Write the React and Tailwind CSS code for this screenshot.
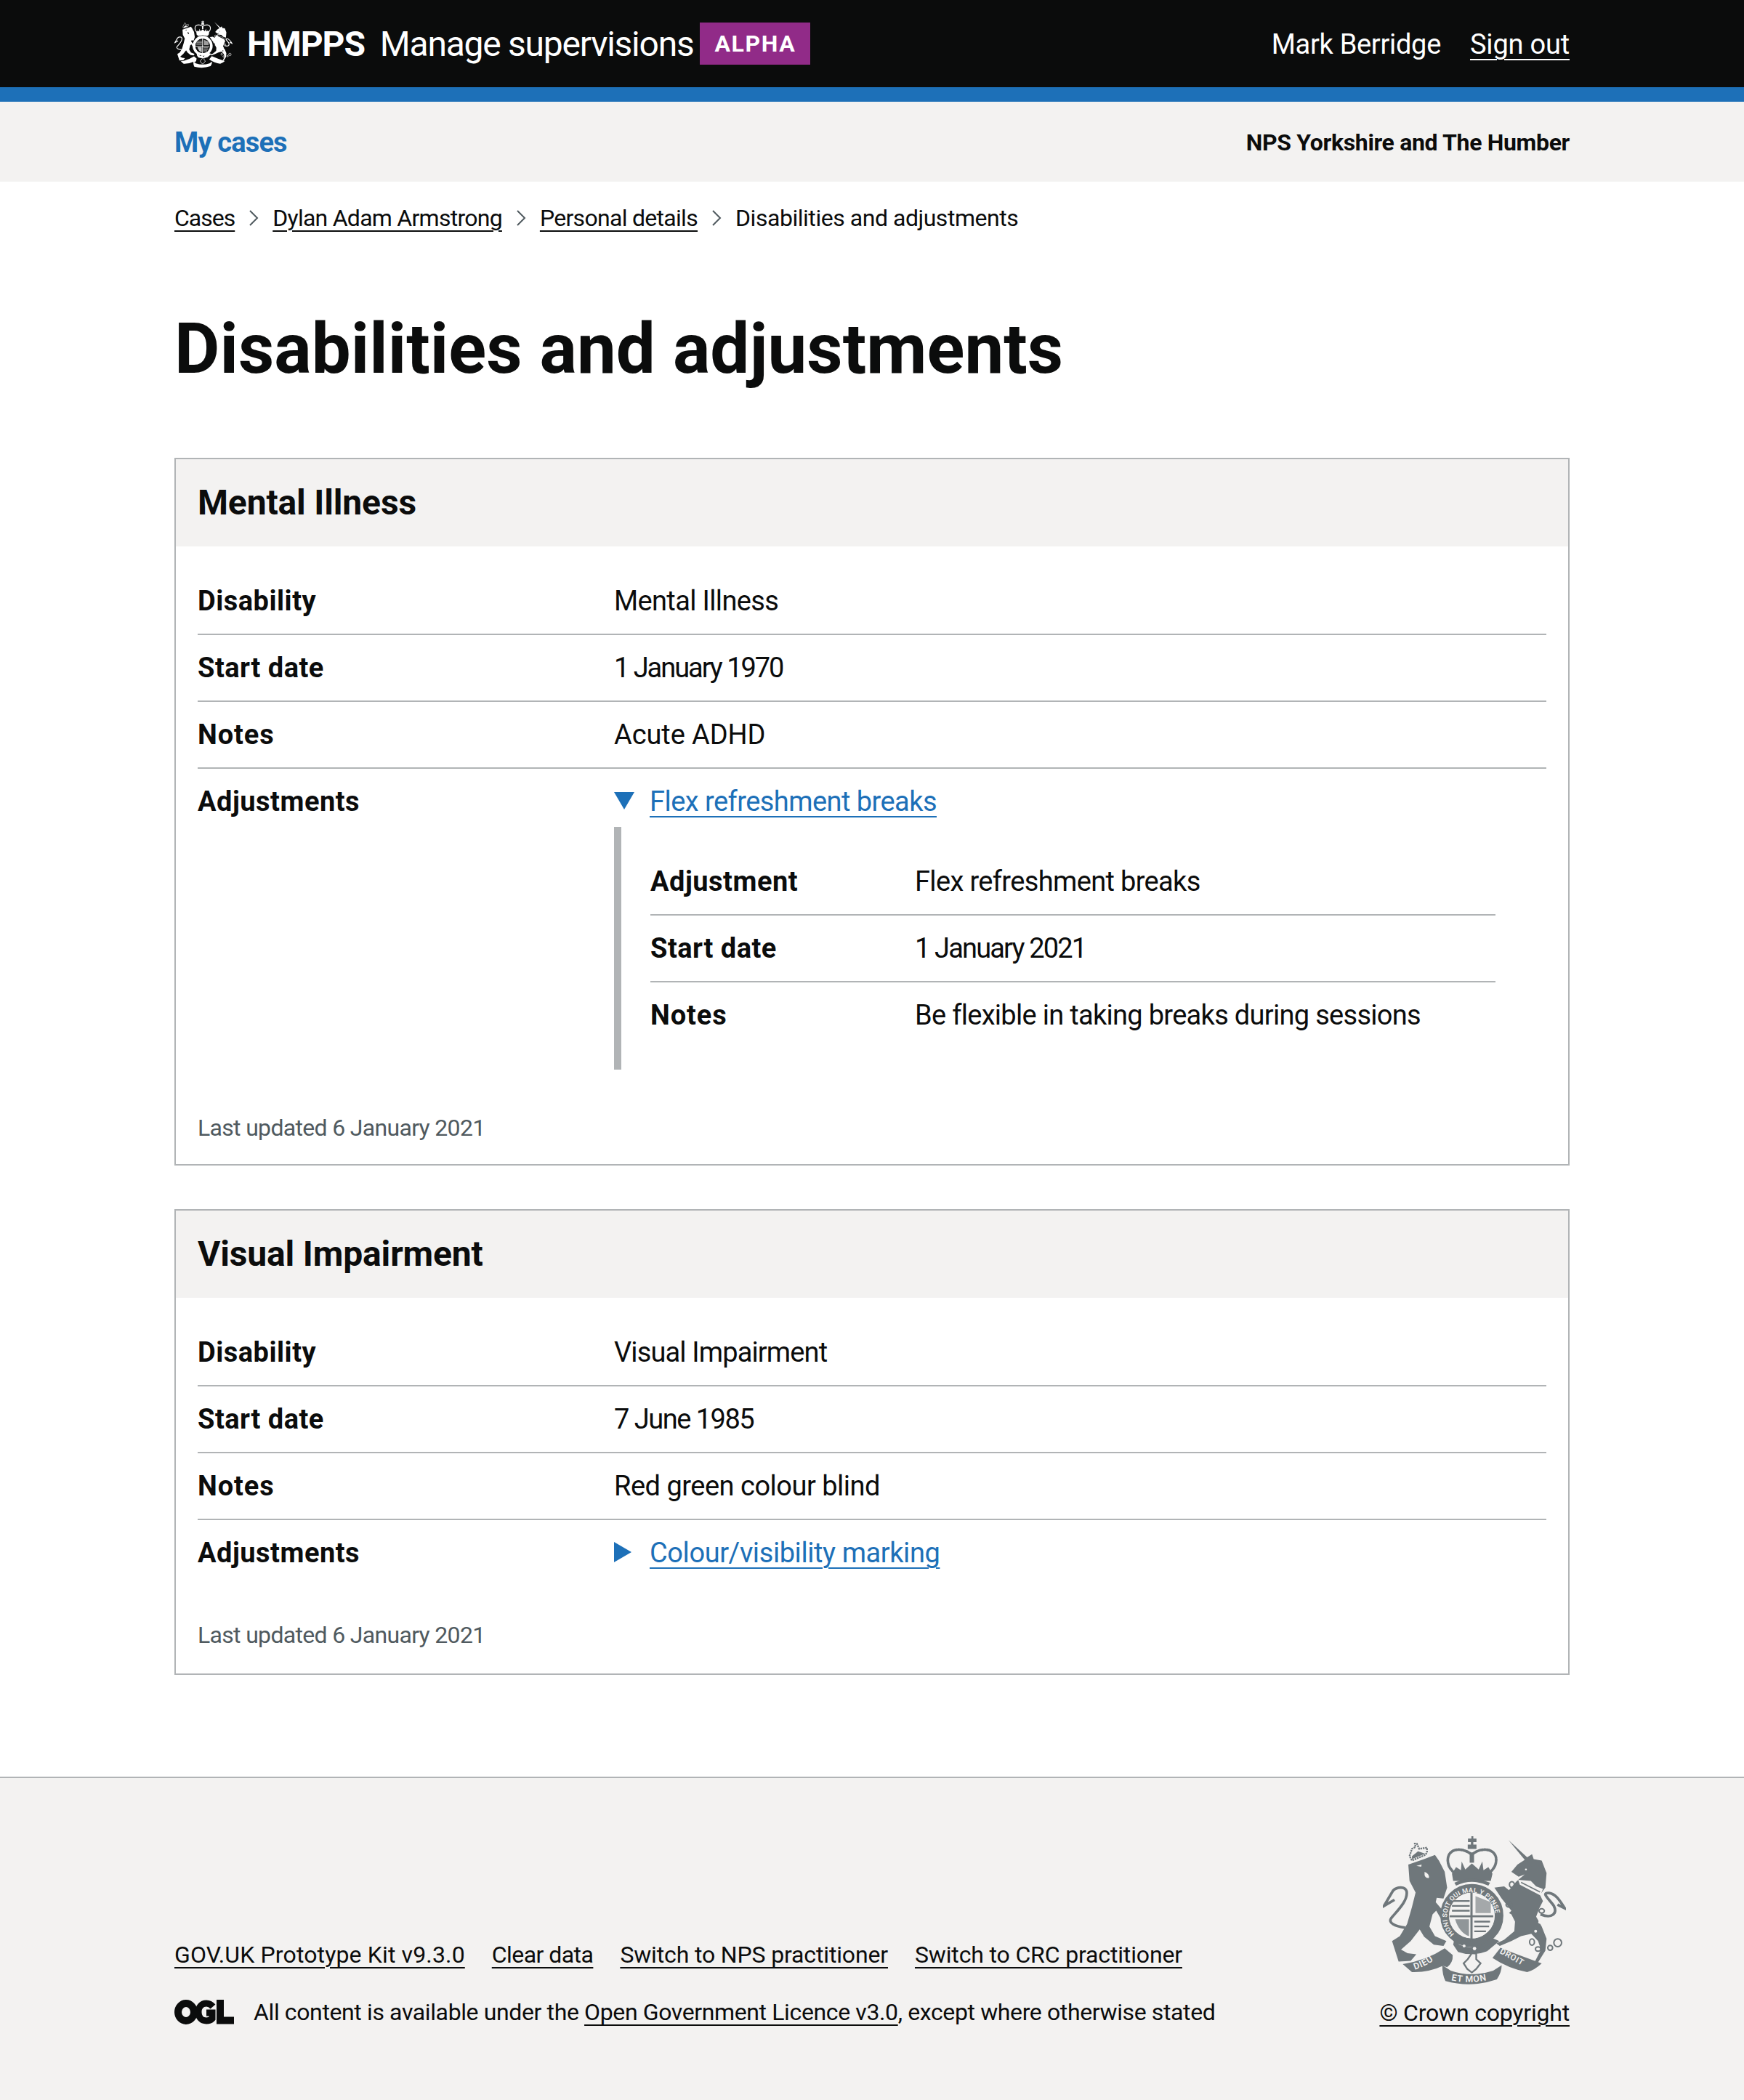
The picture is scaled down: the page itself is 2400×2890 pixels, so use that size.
import React from "react";

function Crest({ color, bg, words, uid }) {
  return (
    <svg viewBox="130 75 755 620" className="block w-full h-full" fill={color}>
      <defs>
        <path id={uid + "g"} d="M425 481 A100 100 0 1 1 569 476" />
        <path id={uid + "a"} d="M262 628 Q320 610 372 565" />
        <path id={uid + "b"} d="M412 672 Q495 690 585 665" />
        <path id={uid + "c"} d="M610 560 Q670 590 730 628" />
      </defs>
      <path d="M235 195 L300 172 L345 155 L362 180 L385 225 L395 290 L380 335 L352 332 L348 350 L392 402 L378 432 L350 385 L335 400 L322 450 L345 490 L392 510 L380 530 L340 525 L300 492 L282 462 L245 510 L205 545 L232 560 L268 565 L245 592 L195 595 L168 510 L200 490 L230 440 L250 370 L265 310 L240 262 Z" />
      <path d="M222 455 C180 450 150 435 165 415 C185 390 235 345 228 305 C222 285 190 285 172 302 L135 365 L178 340" fill="none" stroke={color} strokeWidth="11" />
      <path d="M268 200 L290 195 L288 204 Z M302 225 Q322 232 320 250 Q306 252 302 238 Z" fill={bg} />
      <path d="M240 160 L250 130 L265 122 L262 108 L270 108 L280 130 L312 125 L312 145 L305 155 L250 178 Z" fill="none" stroke={color} strokeWidth="7" strokeDasharray="7 3" />
      <path d="M250 160 L275 140 L305 150 L250 172 Z" />
      <path d="M481 88 H495 V78 H503 V88 H516 V102 H503 V112 H516 V130 H480 V112 H493 V102 H481 Z" />
      <path d="M492 150 C450 120 395 130 398 180 C400 205 412 215 420 225 M502 150 C540 120 602 130 597 180 C595 205 582 215 574 225" fill="none" stroke={color} strokeWidth="11" strokeDasharray="8 4" strokeLinecap="round" />
      <rect x="488" y="145" width="18" height="42" />
      <path d="M415 232 L432 205 L452 218 L455 182 L470 215 L497 190 L525 215 L540 182 L545 218 L565 205 L582 232 L575 262 L420 262 Z" />
      <path d="M425 270 Q497 235 572 270 L565 282 Q497 250 432 282 Z" />
      <circle cx="497" cy="405" r="112" fill="none" stroke={color} strokeWidth="36" />
      <circle cx="497" cy="405" r="94" fill={bg} />
      <g stroke={color} strokeWidth="7" fill="none">
        <path d="M418 345 H488 M415 365 H488 M415 385 H488 M507 430 H572 M507 450 H568 M507 470 H555" />
      </g>
      <path d="M512 325 L575 350 V395 L512 395 Z" opacity="0.6" />
      <path d="M428 420 H485 V490 Q445 475 428 420 Z" opacity="0.75" />
      <rect x="491" y="310" width="9" height="205" />
      <rect x="405" y="404" width="180" height="8" />
      <path d="M425 500 L445 525 Q497 548 555 515 L575 495 L610 510 L560 552 Q497 575 440 555 L420 525 Z" />
      <circle cx="508" cy="541" r="7" fill={bg} />
      <circle cx="465" cy="530" r="6" fill={bg} />
      <path d="M648 94 L725 165 L745 152 L752 172 L785 178 L805 230 L800 290 L778 320 L790 345 L775 375 L762 410 L785 450 L805 500 L800 550 L770 598 L757 595 L782 545 L770 510 L742 480 L700 490 L660 510 L612 530 L598 520 L630 505 L672 470 L675 430 L660 400 L650 395 L660 385 L620 335 L590 290 L630 285 L650 300 L680 265 L715 235 L690 245 L660 225 L685 195 L715 175 Z" />
      <path d="M688 258 L695 278 L780 322 L790 295 L762 285 L740 262 Z" fill={bg} />
      <path d="M700 268 L778 308" stroke={color} strokeWidth="5" fill="none" />
      <g fill="none" stroke={color} strokeWidth="6">
        <ellipse cx="662" cy="277" rx="10" ry="12" />
        <ellipse cx="650" cy="360" rx="12" ry="10" />
        <ellipse cx="785" cy="386" rx="11" ry="9" />
        <ellipse cx="745" cy="514" rx="10" ry="13" />
        <ellipse cx="770" cy="543" rx="11" ry="9" />
        <ellipse cx="820" cy="538" rx="10" ry="10" />
        <ellipse cx="851" cy="517" rx="16" ry="16" />
      </g>
      <g fill={bg}>
        <circle cx="778" cy="432" r="7" />
        <circle cx="760" cy="470" r="6" />
        <circle cx="720" cy="215" r="4" />
      </g>
      <path d="M780 400 C830 420 850 395 835 365 C815 335 780 310 815 312 C840 315 855 335 880 375 L850 360" fill="none" stroke={color} strokeWidth="11" />
      <path d="M212 605 Q310 590 385 540 L418 568 Q420 600 395 618 L378 612 Q320 640 250 638 Z" />
      <path d="M375 610 Q375 650 388 675 Q495 705 600 668 Q620 640 620 610 L585 632 Q495 662 410 632 Z" />
      <path d="M582 580 L615 538 Q680 565 785 602 Q755 630 725 638 Q650 625 582 580 Z" />
      <path d="M497 560 L515 562 L515 585 L533 602 L515 625 L497 640 L478 625 L463 602 L480 585 Z" fill="none" stroke={color} strokeWidth="7" />
      {words && (
        <g fill={bg} fontFamily="Roboto,sans-serif" fontWeight="600">
          <text fontSize="37" letterSpacing="2"><textPath href={"#" + uid + "a"}>DIEU</textPath></text>
          <text fontSize="37" letterSpacing="2"><textPath href={"#" + uid + "b"}>ET MON</textPath></text>
          <text fontSize="34" letterSpacing="2"><textPath href={"#" + uid + "c"}>DROIT</textPath></text>
          <text fontSize="27" letterSpacing="1"><textPath href={"#" + uid + "g"}>HONI SOIT QUI MAL Y PENSE</textPath></text>
        </g>
      )}
    </svg>
  );
}

function Ogl() {
  return (
    <svg viewBox="0 0 82 34" className="block w-[82px] h-[34px] shrink-0" fill="none" stroke="#0b0c0c">
      <ellipse cx="16" cy="17" rx="11" ry="12" strokeWidth="10" />
      <path d="M53 9.5 C50 6 47 5 44 5 C37 5 33 10.5 33 17 C33 24 37 29 44 29 C47 29 50 28 52 26 V18 H44" strokeWidth="9" />
      <path d="M63 0 V28.5 H82" strokeWidth="10" />
    </svg>
  );
}

function Chevron() {
  return (
    <svg viewBox="0 0 14 22" className="w-[14px] h-[22px] mx-[19px] shrink-0" fill="none" stroke="#505a5f" strokeWidth="2">
      <path d="M2 1 L12 11 L2 21" />
    </svg>
  );
}

function Row({ label, children, border = true, value = "tracking-[-0.65px]", labelTrack = "tracking-[0.5px]" }) {
  return (
    <div className={border ? "flex py-5 border-b-2 border-[#b1b4b6]" : "flex py-5"}>
      <div className={"w-[573px] shrink-0 font-bold " + labelTrack}>{label}</div>
      <div className={"flex-1 " + value}>{children}</div>
    </div>
  );
}

function SubRow({ label, children, border = true, value = "tracking-[-0.65px]", labelTrack = "tracking-[0.5px]" }) {
  return (
    <div className={border ? "flex py-5 border-b-2 border-[#b1b4b6]" : "flex py-5"}>
      <div className={"w-[364px] shrink-0 font-bold " + labelTrack}>{label}</div>
      <div className={"flex-1 " + value}>{children}</div>
    </div>
  );
}

function Summary({ open, children, track }) {
  return (
    <div className="flex items-start h-[50px]">
      {open ? (
        <svg viewBox="0 0 28 24" className="w-[28px] h-[24px] mt-3 mr-[21px] shrink-0" fill="#1d70b8"><path d="M0 0 H28 L14 24 Z" /></svg>
      ) : (
        <svg viewBox="0 0 24 28" className="w-[24px] h-[28px] mt-[10px] mr-[25px] shrink-0" fill="#1d70b8"><path d="M0 0 L24 14 L0 28 Z" /></svg>
      )}
      <a className={"text-[#1d70b8] underline decoration-2 underline-offset-[7px] " + track}>{children}</a>
    </div>
  );
}

function Card({ title, children, className }) {
  return (
    <section className={"border-2 border-[#b1b4b6] " + (className || "")}>
      <h2 className="h-[120px] bg-[#f3f2f1] px-[30px] flex items-center text-[48px] leading-[60px] font-bold tracking-[-0.15px]">{title}</h2>
      <div className="px-[30px] pt-[30px]">{children}</div>
    </section>
  );
}

const crumb = "underline decoration-2 underline-offset-[6px]";

export default function App() {
  return (
    <div className="font-['Roboto',sans-serif] text-[#0b0c0c] text-[38px] leading-[50px] bg-white">
      <header className="bg-[#0b0c0c] border-b-[20px] border-[#1d70b8] h-[140px] text-white">
        <div className="w-[1920px] mx-auto h-[120px] flex items-center justify-between pt-[2px]">
          <div className="flex items-center">
            <div className="w-[80px] h-[66px] mr-[20px]"><Crest uid="h" color="#ffffff" bg="#0b0c0c" /></div>
            <span className="text-[48px] font-bold mr-[21px] leading-[60px] tracking-[-1.1px]">HMPPS</span>
            <span className="text-[48px] leading-[60px] font-normal mr-[9px] tracking-[-1.25px]">Manage supervisions</span>
            <span className="bg-[#912b88] w-[152px] h-[58px] -mt-[2px] flex items-center justify-center text-[32px] font-bold tracking-[1.6px] leading-[40px]">ALPHA</span>
          </div>
          <div className="flex items-center">
            <span className="mr-[40px] tracking-[-0.3px]">Mark Berridge</span>
            <a className="underline decoration-2 underline-offset-[7px] tracking-[-0.2px]">Sign out</a>
          </div>
        </div>
      </header>
      <nav className="bg-[#f3f2f1] h-[110px]">
        <div className="w-[1920px] mx-auto h-full flex items-center justify-between pt-[2px]">
          <a className="font-bold text-[#1d70b8] tracking-[-0.85px]">My cases</a>
          <span className="font-bold text-[32px] tracking-[-0.33px]">NPS Yorkshire and The Humber</span>
        </div>
      </nav>
      <main className="w-[1920px] mx-auto pb-[140px]">
        <div className="flex items-center h-[40px] mt-[30px] text-[32px] leading-[40px]">
          <a className={crumb + " tracking-[-1px]"}>Cases</a>
          <Chevron />
          <a className={crumb + " tracking-[-0.74px]"}>Dylan Adam Armstrong</a>
          <Chevron />
          <a className={crumb + " tracking-[-0.7px]"}>Personal details</a>
          <Chevron />
          <span className="tracking-[-0.46px]">Disabilities and adjustments</span>
        </div>
        <h1 className="text-[96px] leading-[100px] font-bold mt-[110px] mb-[100px] tracking-[0.07px]">Disabilities and adjustments</h1>

        <Card title="Mental Illness" className="mb-[60px]">
          <Row label="Disability">Mental Illness</Row>
          <Row label="Start date" value="tracking-[-2.05px]">1 January 1970</Row>
          <Row label="Notes" labelTrack="tracking-[0.9px]" value="tracking-[-0.1px]">Acute ADHD</Row>
          <Row label="Adjustments" border={false}>
            <Summary open track="tracking-[-0.55px]">Flex refreshment breaks</Summary>
            <div className="mt-[10px] w-[1213px] border-l-[10px] border-[#b1b4b6] pl-[40px] py-[30px]">
              <SubRow label="Adjustment">Flex refreshment breaks</SubRow>
              <SubRow label="Start date" value="tracking-[-1.85px]">1 January 2021</SubRow>
              <SubRow label="Notes" labelTrack="tracking-[0.9px]" border={false} value="tracking-[-0.7px]">Be flexible in taking breaks during sessions</SubRow>
            </div>
          </Row>
          <p className="mt-10 mb-[30px] text-[32px] leading-[40px] text-[#505a5f] tracking-[-0.68px]">Last updated 6 January 2021</p>
        </Card>

        <Card title="Visual Impairment">
          <Row label="Disability" value="tracking-[-0.87px]">Visual Impairment</Row>
          <Row label="Start date" value="tracking-[-1.5px]">7 June 1985</Row>
          <Row label="Notes" labelTrack="tracking-[0.9px]" value="tracking-[-0.5px]">Red green colour blind</Row>
          <Row label="Adjustments" border={false}>
            <Summary track="tracking-[-0.42px]">Colour/visibility marking</Summary>
          </Row>
          <p className="mt-12 mb-[33px] text-[32px] leading-[40px] text-[#505a5f] tracking-[-0.68px]">Last updated 6 January 2021</p>
        </Card>
      </main>
      <footer className="bg-[#f3f2f1] border-t-2 border-[#b1b4b6] h-[446px] text-[32px] leading-[40px]">
        <div className="w-[1920px] mx-auto flex justify-between items-start pt-[79px]">
          <div className="pt-[144px]">
            <div className="flex gap-[37px] h-[40px]">
              <a className={crumb + " tracking-[0.14px]"}>GOV.UK Prototype Kit v9.3.0</a>
              <a className={crumb + " tracking-[-0.55px]"}>Clear data</a>
              <a className={crumb + " tracking-[-0.15px]"}>Switch to NPS practitioner</a>
              <a className={crumb + " tracking-[-0.15px]"}>Switch to CRC practitioner</a>
            </div>
            <div className="flex items-center mt-[39px] h-[40px]">
              <Ogl />
              <p className="ml-[27px] tracking-[-0.38px]">All content is available under the <a className={crumb}>Open Government Licence v3.0</a>, except where otherwise stated</p>
            </div>
          </div>
          <div className="flex flex-col items-end">
            <div className="w-[252px] h-[207px] mb-[17px] mr-[5px]"><Crest uid="f" color="#6f777b" bg="#f3f2f1" words /></div>
            <a className={crumb + " tracking-[-0.2px]"}>© Crown copyright</a>
          </div>
        </div>
      </footer>
    </div>
  );
}
